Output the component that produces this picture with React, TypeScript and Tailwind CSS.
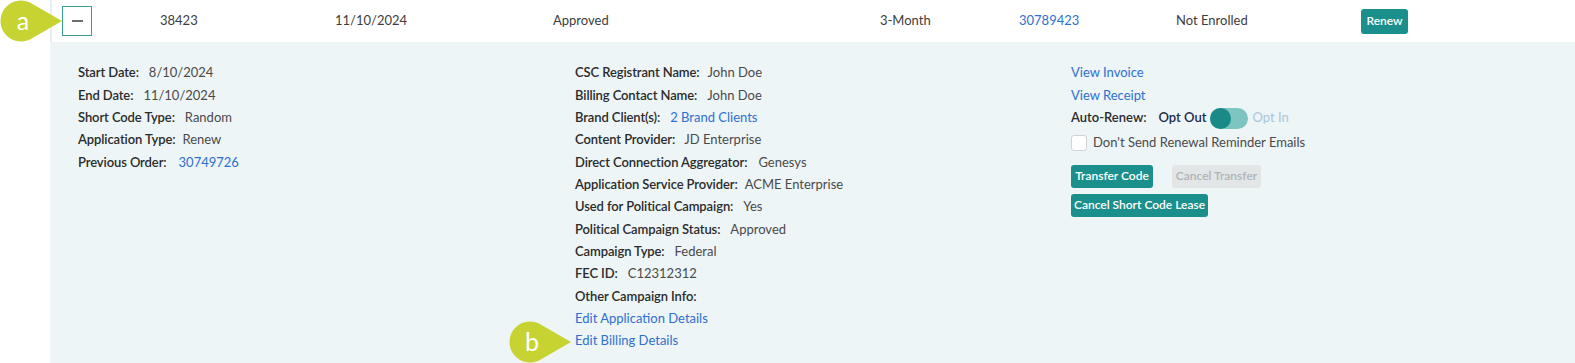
import React from "react";

const font = { fontFamily: "Lato, 'Open Sans', Arial, sans-serif" };

function Callout({ letter, className }: { letter: string; className: string }) {
  const cx = 21, cy = 21, r = 20.5, tx = 62;
  const d = tx - cx;
  const ca = r / d;
  const sa = Math.sqrt(1 - ca * ca);
  const p1x = cx + r * ca, p1y = cy - r * sa, p2y = cy + r * sa;
  return (
    <div className={`absolute w-[63px] h-[42px] ${className}`}>
      <svg width="63" height="42" viewBox="0 0 63 42" className="absolute left-0 top-0">
        <path
          d={`M${tx} ${cy} L${p1x} ${p1y} A${r} ${r} 0 1 0 ${p1x} ${p2y} Z`}
          fill="#c6d330"
        />
      </svg>
      <div className="absolute left-[2px] top-0 w-[42px] h-[42px] flex items-center justify-center text-white text-[25px] leading-none pb-[2px]">
        {letter}
      </div>
    </div>
  );
}

function Field({ label, value, link, gap = 9 }: { label: string; value?: string; link?: boolean; gap?: number }) {
  return (
    <div className="h-[22.33px] flex items-center whitespace-nowrap">
      <span className="font-semibold text-[#2b2b2b] tracking-[-0.1px]">{label}</span>
      {value !== undefined && (
        <span
          style={{ marginLeft: gap }}
          className={link ? "text-[#2e6fd2]" : "text-[#4a4a4a]"}
        >
          {value}
        </span>
      )}
    </div>
  );
}

function LinkRow({ text }: { text: string }) {
  return (
    <div className="h-[22.33px] flex items-center whitespace-nowrap text-[#2e6fd2]">{text}</div>
  );
}

export default function App() {
  return (
    <div className="relative w-[1575px] h-[363px] bg-white flex overflow-hidden text-[13px]" style={font}>
      <div className="w-[50px] shrink-0" />
      <div className="flex-1 flex flex-col">
        {/* top row */}
        <div className="h-[42px] flex items-center border-l-2 border-[#e6eef2] text-[#3d3d3d] whitespace-nowrap">
          <div className="w-[108px] pl-[10px] flex items-center">
            <div className="w-[30px] h-[30px] border-[1.5px] border-[#3a9d99] flex items-center justify-center">
              <div className="w-[11px] h-[2px] bg-[#6d6d6d]" />
            </div>
          </div>
          <div className="w-[175px]">38423</div>
          <div className="w-[218px]">11/10/2024</div>
          <div className="w-[327px]">Approved</div>
          <div className="w-[139px]">3-Month</div>
          <div className="w-[157px] text-[#2e6fd2]">30789423</div>
          <div className="w-[185px]">Not Enrolled</div>
          <div className="h-[25px] w-[47px] rounded-[3px] bg-[#1b8f8b] text-white text-[12px] font-semibold flex items-center justify-center">Renew</div>
        </div>
        {/* detail panel */}
        <div className="flex-1 bg-[#edf5f7] flex pl-[28px] pt-[20px]">
          <div className="w-[497px] flex flex-col">
            <Field label="Start Date:" value="8/10/2024" gap={10} />
            <Field label="End Date:" value="11/10/2024" gap={10} />
            <Field label="Short Code Type:" value="Random" gap={10} />
            <Field label="Application Type:" value="Renew" gap={7} />
            <Field label="Previous Order:" value="30749726" link gap={12} />
          </div>
          <div className="w-[496px] flex flex-col">
            <Field label="CSC Registrant Name:" value="John Doe" gap={8} />
            <Field label="Billing Contact Name:" value="John Doe" gap={10} />
            <Field label="Brand Client(s):" value="2 Brand Clients" link gap={10} />
            <Field label="Content Provider:" value="JD Enterprise" gap={9} />
            <Field label="Direct Connection Aggregator:" value="Genesys" gap={11} />
            <Field label="Application Service Provider:" value="ACME Enterprise" gap={7} />
            <Field label="Used for Political Campaign:" value="Yes" gap={10} />
            <Field label="Political Campaign Status:" value="Approved" gap={10} />
            <Field label="Campaign Type:" value="Federal" gap={10} />
            <Field label="FEC ID:" value="C12312312" gap={10} />
            <Field label="Other Campaign Info:" />
            <LinkRow text="Edit Application Details" />
            <LinkRow text="Edit Billing Details" />
          </div>
          <div className="flex flex-col">
            <LinkRow text="View Invoice" />
            <LinkRow text="View Receipt" />
            <div className="h-[23px] flex items-center whitespace-nowrap">
              <span className="font-semibold text-[#2b2b2b]">Auto-Renew:</span>
              <span className="ml-[12px] font-semibold text-[#1d2b48]">Opt Out</span>
              <div className="ml-[3px] w-[38px] h-[21px] rounded-full bg-[#7dc5c0] flex items-center">
                <div className="w-[21px] h-[21px] rounded-full bg-[#1a8a86]" />
              </div>
              <span className="ml-[5px] text-[#a9c6d8]">Opt In</span>
            </div>
            <div className="h-[26px] flex items-center gap-[6px] whitespace-nowrap">
              <div className="w-[16px] h-[16px] bg-white border border-[#cfd4d8] rounded-[3px]" />
              <span className="text-[#4a4a4a]">Don't Send Renewal Reminder Emails</span>
            </div>
            <div className="mt-[9px] flex gap-[19px]">
              <div className="h-[23px] w-[82px] rounded-[3px] bg-[#1b8f8b] text-white text-[12px] font-semibold flex items-center justify-center whitespace-nowrap">Transfer Code</div>
              <div className="h-[23px] w-[89px] rounded-[3px] bg-[#e3e6e7] text-[#aeb4b8] text-[12px] font-semibold flex items-center justify-center whitespace-nowrap">Cancel Transfer</div>
            </div>
            <div className="mt-[6px] flex">
              <div className="h-[23px] w-[137px] rounded-[3px] bg-[#1b8f8b] text-white text-[12px] font-semibold flex items-center justify-center whitespace-nowrap">Cancel Short Code Lease</div>
            </div>
          </div>
        </div>
      </div>
      <Callout letter="a" className="left-0 top-0" />
      <Callout letter="b" className="left-[509px] top-[321px]" />
    </div>
  );
}
